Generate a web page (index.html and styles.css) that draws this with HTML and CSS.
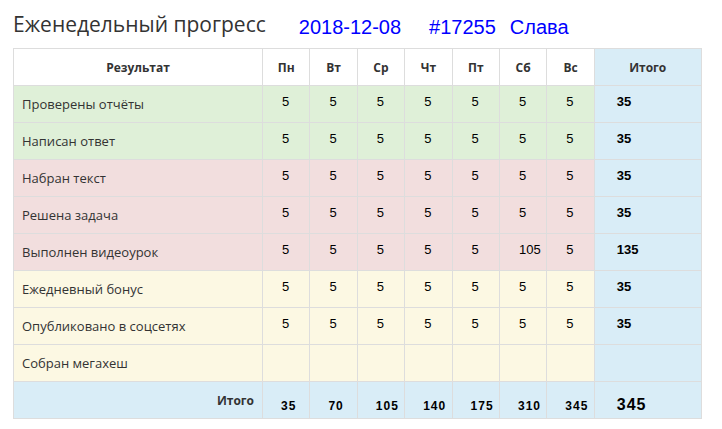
FILE: index.html
```html
<!DOCTYPE html>
<html lang="ru">
<head>
<meta charset="utf-8">
<link rel="stylesheet" href="styles.css">
</head>
<body>
<div class="page">
  <div class="head">
    <h1 class="title">Еженедельный прогресс</h1>
    <span class="meta date">2018-12-08</span>
    <span class="meta num">#17255</span>
    <span class="meta name">Слава</span>
  </div>
  <table class="grid">
    <colgroup>
      <col class="c-label"><col class="c-day"><col class="c-day"><col class="c-day"><col class="c-day"><col class="c-day"><col class="c-day"><col class="c-day"><col class="c-total">
    </colgroup>
    <thead>
      <tr>
        <th>Результат</th><th>Пн</th><th>Вт</th><th>Ср</th><th>Чт</th><th>Пт</th><th>Сб</th><th>Вс</th><th class="tot">Итого</th>
      </tr>
    </thead>
    <tbody>
      <tr class="ok"><td class="lbl">Проверены отчёты</td><td>5</td><td>5</td><td>5</td><td>5</td><td>5</td><td>5</td><td>5</td><td class="tot">35</td></tr>
      <tr class="ok"><td class="lbl">Написан ответ</td><td>5</td><td>5</td><td>5</td><td>5</td><td>5</td><td>5</td><td>5</td><td class="tot">35</td></tr>
      <tr class="bad"><td class="lbl">Набран текст</td><td>5</td><td>5</td><td>5</td><td>5</td><td>5</td><td>5</td><td>5</td><td class="tot">35</td></tr>
      <tr class="bad"><td class="lbl">Решена задача</td><td>5</td><td>5</td><td>5</td><td>5</td><td>5</td><td>5</td><td>5</td><td class="tot">35</td></tr>
      <tr class="bad"><td class="lbl">Выполнен видеоурок</td><td>5</td><td>5</td><td>5</td><td>5</td><td>5</td><td>105</td><td>5</td><td class="tot">135</td></tr>
      <tr class="warn"><td class="lbl">Ежедневный бонус</td><td>5</td><td>5</td><td>5</td><td>5</td><td>5</td><td>5</td><td>5</td><td class="tot">35</td></tr>
      <tr class="warn"><td class="lbl">Опубликовано в соцсетях</td><td>5</td><td>5</td><td>5</td><td>5</td><td>5</td><td>5</td><td>5</td><td class="tot">35</td></tr>
      <tr class="warn"><td class="lbl">Собран мегахеш</td><td></td><td></td><td></td><td></td><td></td><td></td><td></td><td class="tot"></td></tr>
    </tbody>
    <tfoot>
      <tr class="sum"><td class="sum-lbl">Итого</td><td>35</td><td>70</td><td>105</td><td>140</td><td>175</td><td>310</td><td>345</td><td class="tot grand">345</td></tr>
    </tfoot>
  </table>
</div>
</body>
</html>
```

FILE: styles.css
```css
html, body {
  margin: 0;
  padding: 0;
  background: #fff;
}
.page {
  padding: 9px 0 0 13px;
}
.head {
  display: flex;
  align-items: baseline;
  height: 39px;
}
.title {
  margin: 0;
  font-family: "Open Sans", sans-serif;
  font-weight: 400;
  font-size: 21px;
  color: #333;
  line-height: 30px;
}
.meta {
  font-family: "Liberation Sans", Arial, sans-serif;
  font-size: 20px;
  color: #0000ff;
  position: relative;
  top: 2px;
}
.date { margin-left: 33px; }
.num { margin-left: 28px; }
.name { margin-left: 14px; }

.grid {
  border-collapse: collapse;
  table-layout: fixed;
  width: 688px;
}
.c-label { width: 249px; }
.c-day { width: 47.4px; }
.c-total { width: 107px; }
.grid th, .grid td {
  border: 1px solid #dddddd;
  height: 37px;
  box-sizing: border-box;
  padding: 0;
}
.grid th {
  background: #fff;
  font-family: "Open Sans", sans-serif;
  font-weight: 700;
  font-size: 12px;
  color: #333;
  text-align: center;
  vertical-align: middle;
}
.grid th.tot { background: #d9edf7; }
.grid td {
  font-family: "Liberation Sans", Arial, sans-serif;
  font-size: 13px;
  color: #000;
  text-align: left;
  vertical-align: top;
  padding: 8px 0 0 19px;
  line-height: 15px;
}
.grid td.lbl {
  font-family: "Open Sans", sans-serif;
  font-size: 13px;
  color: #333;
  padding: 0 0 0 8px;
  vertical-align: middle;
  line-height: 20px;
}
.grid td.tot {
  background: #d9edf7;
  font-weight: 700;
  padding-left: 22px;
}
.ok td { background: #dff0d8; }
.bad td { background: #f2dede; }
.warn td { background: #fcf8e3; }
.sum td {
  background: #d9edf7;
  font-weight: 700;
  font-size: 12px;
  letter-spacing: 1px;
  padding-top: 17px;
  padding-left: 18px;
}
.grid td.sum-lbl {
  font-family: "Open Sans", sans-serif;
  font-size: 12px;
  letter-spacing: 0;
  color: #333;
  text-align: right;
  padding: 11px 8px 0 0;
}
.grid td.grand {
  font-size: 16px;
  letter-spacing: 1px;
  padding-top: 15px;
  padding-left: 22px;
}
```
